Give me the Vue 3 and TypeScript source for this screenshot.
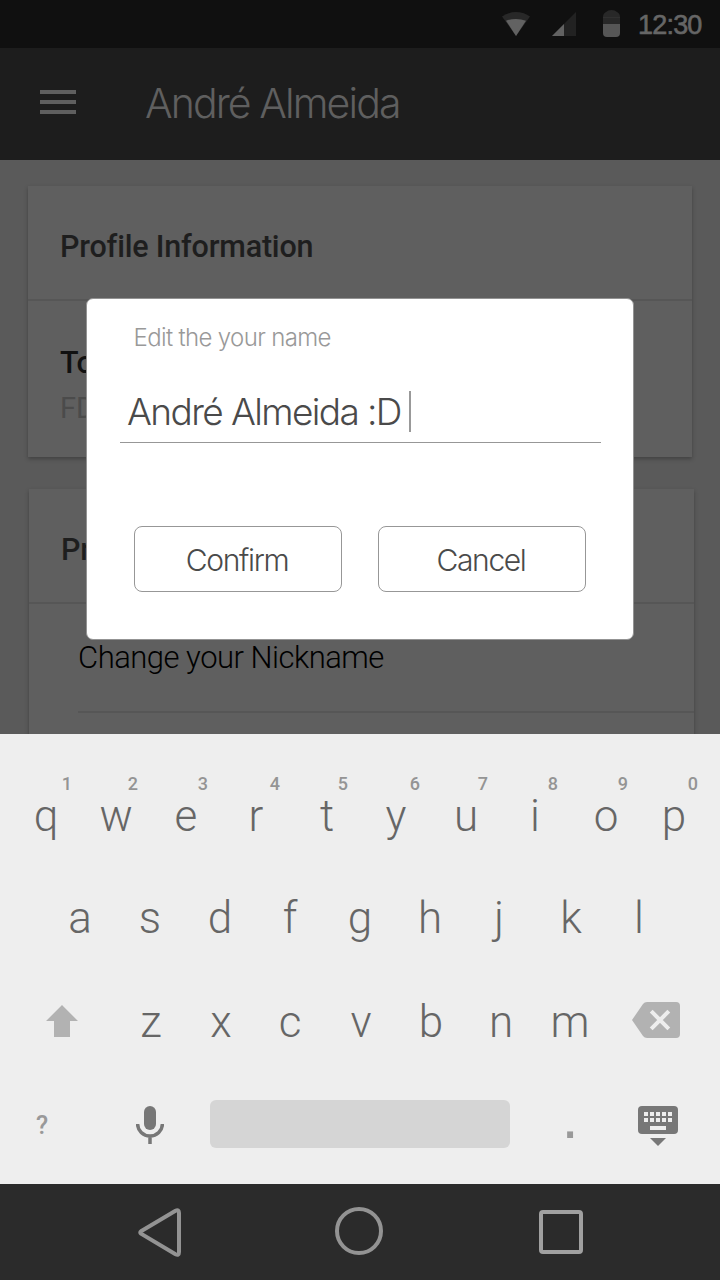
<script setup lang="ts">
import { ref } from 'vue'

interface Key {
  label: string
  hint?: string
}

const name = ref('André Almeida :D')

const topRow: Key[] = [...'qwertyuiop'].map((label, i) => ({
  label,
  hint: String((i + 1) % 10),
}))
const homeRow: Key[] = [...'asdfghjkl'].map((label) => ({ label }))
const bottomRow: Key[] = [...'zxcvbnm'].map((label) => ({ label }))
const keyDots = [0, 1, 2, 3, 4]
</script>

<template>
  <div class="phone">
    <header class="status">
      <svg class="wifi" width="28" height="24" viewBox="0 0 28 24">
        <path d="M0 4.400Q14-4.400 28 4.400L14 24Z" fill="#282828" />
        <path d="M4 8.700Q14 5.300 24 8.700L14 24Z" fill="#626262" />
      </svg>
      <svg class="signal" width="24" height="24" viewBox="0 0 24 24">
        <path d="M24 0V24H0Z" fill="#222" />
        <path d="M12 12V24H0Z" fill="#626262" />
      </svg>
      <svg class="battery" width="17" height="27" viewBox="0 0 17 27">
        <path d="M0 14V7Q0 3.500 3 2Q5 0 8.500 0T14 2Q17 3.500 17 7V14Z" fill="#282828" />
        <path d="M0 7.500H17" stroke="#303030" />
        <path d="M0 14H17V23Q17 27 13 27H4Q0 27 0 23Z" fill="#565656" />
      </svg>
      <span class="clock">12:30</span>
    </header>

    <div class="appbar">
      <svg width="36" height="24" viewBox="0 0 36 24">
        <path d="M0 2H36M0 12H36M0 22H36" stroke="#5f5f5f" stroke-width="4" />
      </svg>
      <h1>André Almeida</h1>
    </div>

    <main class="content">
      <section class="card first">
        <h2>Profile Information</h2>
        <div class="entry">
          <p class="team">To</p>
          <p class="detail">FD</p>
        </div>
      </section>
      <section class="card second">
        <h2>Pr</h2>
        <p class="option">Change your Nickname</p>
      </section>

      <div class="dialog" role="dialog">
        <label for="name">Edit the your name</label>
        <div id="name" class="field"><span>{{ name }}</span><i class="caret"></i></div>
        <div class="actions">
          <button type="button">Confirm</button>
          <button type="button">Cancel</button>
        </div>
      </div>
    </main>

    <div class="keyboard">
      <div class="row top">
        <div v-for="key in topRow" :key="key.label" class="key" :class="'k-' + key.label">
          {{ key.label }}<sup>{{ key.hint }}</sup>
        </div>
      </div>
      <div class="row home">
        <div v-for="key in homeRow" :key="key.label" class="key" :class="'k-' + key.label">{{ key.label }}</div>
      </div>
      <div class="row bottom">
        <svg class="shift" width="32" height="32" viewBox="0 0 32 32">
          <path d="M16 0L32 16H24V32H8V16H0Z" fill="#b2b2b2" />
        </svg>
        <div class="letters">
          <div v-for="key in bottomRow" :key="key.label" class="key" :class="'k-' + key.label">{{ key.label }}</div>
        </div>
        <svg class="erase" width="48" height="36" viewBox="0 0 48 36">
          <path d="M0 18L11 2Q12.500 0 15 0H44Q48 0 48 4V32Q48 36 44 36H15Q12.500 36 11 34Z" fill="#b2b2b2" />
          <path d="M19.200 9.200L36.800 26.800M36.800 9.200L19.200 26.800" stroke="#eee" stroke-width="4" />
        </svg>
      </div>
      <div class="row tools">
        <span class="symbols">?</span>
        <svg class="mic" width="28" height="38" viewBox="0 0 28 38">
          <rect x="8" width="12" height="24" rx="6" fill="#777" />
          <path d="M1.600 18A12.400 12 0 0 0 26.400 18M14 30V38" fill="none" stroke="#777" stroke-width="3.500" />
        </svg>
        <div class="space"></div>
        <span class="dot">.</span>
        <svg class="hide" width="40" height="40" viewBox="0 0 40 40">
          <rect width="40" height="28" rx="4" fill="#777" />
          <g fill="#eee">
            <rect v-for="n in keyDots" :key="'a' + n" :x="6 + n * 6" y="6" width="4" height="4" />
            <rect v-for="n in keyDots" :key="'b' + n" :x="6 + n * 6" y="12" width="4" height="4" />
            <rect x="12" y="20" width="16" height="4" />
          </g>
          <path d="M12 32H28L20 40Z" fill="#777" />
        </svg>
      </div>
    </div>

    <nav class="navbar">
      <svg class="back" width="44" height="50" viewBox="0 0 44 50">
        <path d="M3 23.300L37.500 2.800Q41 1 41 5V44Q41 48 37.500 46.200L3 25.700Q1.500 24.500 3 23.300Z" fill="none" stroke="#939393" stroke-width="4" />
      </svg>
      <svg class="home-icon" width="48" height="48" viewBox="0 0 48 48">
        <circle cx="24" cy="24" r="22" fill="none" stroke="#939393" stroke-width="4" />
      </svg>
      <svg class="recent" width="44" height="44" viewBox="0 0 44 44">
        <rect x="2" y="2" width="40" height="40" rx="2" fill="none" stroke="#a0a0a0" stroke-width="4" />
      </svg>
    </nav>
  </div>
</template>

<style>
body {
  margin: 0;
}
</style>

<style scoped>
.phone {
  width: 720px;
  height: 1280px;
  overflow: hidden;
  display: flex;
  flex-direction: column;
  font-family: Roboto, sans-serif;
}
h1, h2, p {
  margin: 0;
}
svg {
  display: block;
  flex: none;
}
.status {
  height: 48px;
  flex: none;
  box-sizing: border-box;
  background: #101010;
  display: flex;
  align-items: flex-start;
  padding: 10px 0 0 502px;
}
.wifi, .signal {
  margin-top: 2px;
}
.signal {
  margin-left: 22px;
}
.battery {
  margin-left: 27px;
}
.clock {
  margin-left: 18px;
  font: 27px/30px "Liberation Sans", Arial, sans-serif;
  letter-spacing: -0.8px;
  color: #666;
  -webkit-text-stroke: 0.6px #666;
}
.appbar {
  height: 112px;
  flex: none;
  box-sizing: border-box;
  background: #1d1d1d;
  display: flex;
  align-items: flex-start;
  padding: 42px 0 0 40px;
}
.appbar h1 {
  margin: -12px 0 0 69px;
  font: 330 41px/50px Inter, sans-serif;
  letter-spacing: -1.9px;
  color: #5f5f5f;
}
.content {
  position: relative;
  height: 574px;
  flex: none;
  box-sizing: border-box;
  overflow: hidden;
  background: #5a5a5a;
  padding: 26px 26px 0 28px;
}
.card {
  background: #5f5f5f;
  box-shadow: 0 2px 4px rgba(0, 0, 0, 0.28);
}
.card h2 {
  height: 115px;
  box-sizing: border-box;
  border-bottom: 2px solid #565656;
  font-size: 30.5px;
  font-weight: 480;
  line-height: 35px;
  letter-spacing: -0.2px;
  padding: 43px 0 0 32px;
  color: #1e1e1e;
}
.first {
  width: 664px;
  height: 271px;
}
.second {
  width: 665px;
  height: 300px;
  margin: 32px 0 0 1px;
}
.entry {
  padding: 44px 0 0 32px;
}
.team {
  font-size: 30.5px;
  font-weight: 480;
  line-height: 35px;
  color: #111;
}
.detail {
  margin-top: 11px;
  font-size: 29px;
  line-height: 34px;
  color: #4b4b4b;
}
.option {
  margin-left: 49px;
  height: 109px;
  box-sizing: border-box;
  padding-top: 36px;
  border-bottom: 2px solid #565656;
  font-size: 31px;
  font-weight: 300;
  line-height: 36px;
  letter-spacing: -0.5px;
  color: #000;
}
.dialog {
  position: absolute;
  left: 86px;
  top: 138px;
  width: 548px;
  height: 342px;
  box-sizing: border-box;
  border: 1px solid #939393;
  border-radius: 7px;
  background: #fff;
  font-family: Inter, sans-serif;
  font-weight: 320;
  padding: 24px 32px 0 33px;
  display: flex;
  flex-direction: column;
}
.dialog label {
  padding-left: 13.5px;
  font-size: 24px;
  line-height: 30px;
  letter-spacing: -0.65px;
  color: #999;
}
.field {
  height: 51px;
  margin-top: 38px;
  border-bottom: 1px solid #979797;
  padding-left: 7px;
  display: flex;
  align-items: flex-start;
  font-size: 37px;
  line-height: 42px;
  letter-spacing: -1.6px;
  color: #4a4a4a;
}
.caret {
  width: 2px;
  height: 41px;
  margin: 0 0 0 8px;
  background: #999;
}
.actions {
  display: flex;
  gap: 36px;
  margin: 83px 0 0 14px;
}
.actions button {
  width: 208px;
  height: 66px;
  padding: 2px 2px 0 0;
  border: 1px solid #979797;
  border-radius: 8px;
  background: #fff;
  color: #4a4a4a;
  font: inherit;
  font-size: 30px;
  letter-spacing: -1.35px;
}
.keyboard {
  height: 450px;
  flex: none;
  background: #eee;
  color: #666;
}
.row {
  display: flex;
}
.key {
  position: relative;
  width: 70px;
  box-sizing: border-box;
  font-size: 44px;
  font-weight: 350;
  line-height: 52px;
  text-align: center;
}
.k-i, .k-j, .k-c, .k-m, .k-l {
  padding-right: 2px;
}
.k-p {
  padding-right: 4px;
}
.k-t, .k-k {
  padding-left: 2px;
}
.top {
  padding: 56px 0 0 11px;
}
.key sup {
  position: absolute;
  right: 13px;
  top: -17px;
  font-size: 18px;
  font-weight: 500;
  line-height: 22px;
  color: #949494;
}
.k-q sup {
  right: 9px;
}
.k-r sup, .k-y sup {
  right: 11px;
}
.home {
  padding: 50px 0 0 45px;
}
.bottom {
  padding: 52px 0 0 46px;
}
.letters {
  display: flex;
  margin-left: 38px;
}
.shift {
  margin-top: 9px;
}
.erase {
  margin: 6px 0 0 26px;
}
.tools {
  padding: 52px 0 0 36px;
}
.symbols {
  width: 14px;
  margin-top: 11px;
  font-size: 25px;
  font-weight: 500;
  line-height: 30px;
  color: #999;
}
.mic {
  margin: 6px 0 0 86px;
}
.space {
  width: 300px;
  height: 48px;
  margin-left: 46px;
  border-radius: 6px;
  background: #d5d5d5;
}
.dot {
  width: 20px;
  margin: -9px 0 0 50px;
  font: 62px/52px "Liberation Sans", Arial, sans-serif;
  text-align: center;
  color: #999;
}
.hide {
  margin: 6px 0 0 58px;
}
.navbar {
  height: 96px;
  flex: none;
  box-sizing: border-box;
  background: #2b2b2b;
  display: flex;
  align-items: flex-start;
  padding: 23px 0 0 138px;
}
.back {
  margin-top: 1px;
}
.home-icon {
  margin-left: 153px;
}
.recent {
  margin: 3px 0 0 156px;
}
</style>
